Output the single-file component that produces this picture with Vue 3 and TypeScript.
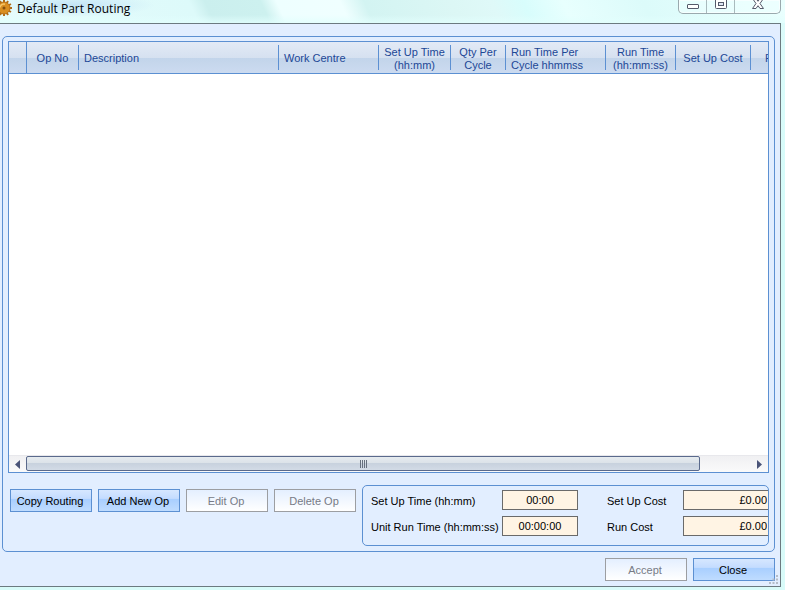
<script setup lang="ts">
import { ref } from 'vue'

interface Column {
  lines: string[]
  width: number
  align: 'left' | 'center'
}

const columns: Column[] = [
  { lines: ['Op No'], width: 52, align: 'center' },
  { lines: ['Description'], width: 200, align: 'left' },
  { lines: ['Work Centre'], width: 100, align: 'left' },
  { lines: ['Set Up Time', '(hh:mm)'], width: 72, align: 'center' },
  { lines: ['Qty Per', 'Cycle'], width: 55, align: 'center' },
  { lines: ['Run Time Per', 'Cycle hhmmss'], width: 100, align: 'left' },
  { lines: ['Run Time', '(hh:mm:ss)'], width: 70, align: 'center' },
  { lines: ['Set Up Cost'], width: 75, align: 'center' },
  { lines: ['Run Cost'], width: 75, align: 'center' },
]

const setUpTime = ref('00:00')
const unitRunTime = ref('00:00:00')
const setUpCost = ref('£0.00')
const runCost = ref('£0.00')

const teeth = Array.from({ length: 12 }, (_, i) => i * 30)
</script>

<template>
  <div class="window">
    <header class="titlebar">
      <svg class="app-icon" viewBox="0 0 16 16" aria-hidden="true">
        <g fill="#b06c18">
          <rect v-for="a in teeth" :key="a" x="7" y="0" width="2" height="4" :transform="`rotate(${a} 8 8)`" />
        </g>
        <circle cx="8" cy="8" r="6" fill="#d98e22" stroke="#b87018" />
        <path d="M4 7.500a4 4 0 0 1 5-3.300" fill="none" stroke="#f6c566" stroke-width="1.500" />
        <circle cx="8" cy="8" r="1.500" fill="#84500f" />
      </svg>
      <h1>Default Part Routing</h1>
      <div class="caption-buttons">
        <button type="button" class="cap" aria-label="Minimise">
          <svg width="14" height="14" viewBox="0 0 14 14"><rect x="1.500" y="4.500" width="11" height="4" rx="0.500" fill="#fff" stroke="#555a6b" /></svg>
        </button>
        <button type="button" class="cap" aria-label="Maximise">
          <svg width="14" height="14" viewBox="0 0 14 14"><rect x="1.500" y="-2.500" width="11" height="11" rx="1" fill="#fff" stroke="#555a6b" /><rect x="4.500" y="2.500" width="5" height="3" fill="#dfe6f4" stroke="#555a6b" /></svg>
        </button>
        <button type="button" class="cap wide" aria-label="Close window">
          <svg width="14" height="14" viewBox="0 0 14 14"><path d="M1.500-1.500h3.500l2 2.800 2-2.800h3.500L9 3.500l3.500 5H9L7 5.700l-2 2.800H1.500L5 3.500z" fill="#fff" stroke="#555a6b" /></svg>
        </button>
      </div>
    </header>

    <main class="client">
      <section class="panel">
        <div class="grid">
          <div class="grid-view">
            <table>
              <colgroup>
                <col class="selector-col" />
                <col v-for="c in columns" :key="c.lines[0]" :style="{ width: c.width + 'px' }" />
              </colgroup>
              <thead>
                <tr>
                  <td class="selector"></td>
                  <th v-for="c in columns" :key="c.lines[0]" scope="col" :class="c.align">
                    <div class="cell"><span><template v-for="(l, i) in c.lines" :key="l"><br v-if="i" />{{ l }}</template></span></div>
                  </th>
                </tr>
              </thead>
            </table>
          </div>
          <div class="scrollbar">
            <button type="button" class="arrow" aria-label="Scroll left">
              <svg width="5" height="9" viewBox="0 0 5 9"><path d="M5 0v9L0 4.500z" fill="#4a5478" /></svg>
            </button>
            <div class="track">
              <div class="thumb"><i></i><i></i><i></i><i></i></div>
            </div>
            <button type="button" class="arrow" aria-label="Scroll right">
              <svg width="5" height="9" viewBox="0 0 5 9"><path d="M0 0v9l5-4.500z" fill="#4a5478" /></svg>
            </button>
          </div>
        </div>

        <div class="lower">
          <div class="actions">
            <button type="button" class="btn">Copy Routing</button>
            <button type="button" class="btn">Add New Op</button>
            <button type="button" class="btn" disabled>Edit Op</button>
            <button type="button" class="btn" disabled>Delete Op</button>
          </div>
          <div class="totals">
            <label for="setup-time">Set Up Time (hh:mm)</label>
            <input id="setup-time" v-model="setUpTime" type="text" readonly />
            <label for="setup-cost" class="second">Set Up Cost</label>
            <input id="setup-cost" v-model="setUpCost" type="text" class="cost" readonly />
            <label for="run-time">Unit Run Time (hh:mm:ss)</label>
            <input id="run-time" v-model="unitRunTime" type="text" readonly />
            <label for="run-cost" class="second">Run Cost</label>
            <input id="run-cost" v-model="runCost" type="text" class="cost" readonly />
          </div>
        </div>
      </section>

      <footer class="footer">
        <button type="button" class="btn" disabled>Accept</button>
        <button type="button" class="btn">Close</button>
      </footer>
      <svg class="grip" width="9" height="9" viewBox="0 0 9 9" fill="#b4bcc8" aria-hidden="true">
        <path d="M7 0h2v2H7zM7 3.500h2v2H7zM7 7h2v2H7zM3.500 3.500h2v2h-2zM3.500 7h2v2h-2zM0 7h2v2H0z" />
      </svg>
    </main>
  </div>
</template>

<style>
body {
  margin: 0;
}
</style>

<style scoped>
.window,
.window * {
  box-sizing: border-box;
}
.window {
  display: flex;
  flex-direction: column;
  min-height: 100vh;
  padding: 0 4px 3px 0;
  background: linear-gradient(175deg, #dffcfb 0%, #d4fbf9 50%, #d9fbf9 100%);
  font-family: "Liberation Sans", Arial, sans-serif;
  font-size: 11px;
  line-height: 13px;
  color: #000;
  overflow: hidden;
}
button,
input {
  font: inherit;
  margin: 0;
}
.titlebar {
  display: flex;
  align-items: flex-start;
  height: 23px;
  margin-right: -4px;
  padding-right: 4px;
  background:
    linear-gradient(rgba(226, 255, 253, 0) 65%, rgba(226, 255, 253, 0.8) 100%),
    radial-gradient(ellipse 80px 12px at 75px 5px, #c4e4f6 0%, rgba(196, 228, 246, 0) 100%),
    linear-gradient(65deg, #e6fcfc 0%, #ddfafa 25%, #cbefee 27%, #cdf1ef 34%, #eeffff 36%, #f0ffff 44%, #d3f4f2 47%, #dcf7f5 58%, #dff9f8 63%, #d8fdfc 67%, #e8fffe 72%, #dcfbfa 82%, #eafffe 100%);
}
.app-icon {
  flex: none;
  width: 16px;
  height: 16px;
  margin-left: -4px;
}
h1 {
  flex: 1;
  margin: 0 0 0 5px;
  font: 12px/18px "Open Sans", "Noto Sans", sans-serif;
  white-space: nowrap;
}
.caption-buttons {
  display: flex;
  height: 14px;
  border: 1px solid #9aa9ae;
  border-top: 0;
  border-radius: 0 0 5px 5px;
  background: rgba(240, 255, 255, 0.5);
  box-shadow: inset 0 0 0 1px rgba(255, 255, 255, 0.6);
}
.cap {
  display: flex;
  justify-content: center;
  width: 28px;
  padding: 0;
  border: 0;
  border-right: 1px solid #a9babd;
  background: none;
}
.cap svg {
  flex: none;
}
.cap.wide {
  width: 45px;
  border-right: 0;
}
.client {
  position: relative;
  flex: 1;
  display: flex;
  flex-direction: column;
  padding: 12px 5px 5px 2px;
  border: solid #6c7a80;
  border-width: 1px 1px 1px 0;
  background: #e2eeff;
}
.panel {
  flex: 1;
  display: flex;
  flex-direction: column;
  padding: 4px 5px 5px;
  border: 1px solid #5c90d2;
  border-radius: 5px;
}
.grid {
  flex: 1;
  display: flex;
  flex-direction: column;
  border: 1px solid #5c90d2;
  background: #fff;
}
.grid-view {
  flex: 1;
  width: 100%;
  overflow: hidden;
  contain: inline-size;
}
table {
  width: 817px;
  table-layout: fixed;
  border-collapse: separate;
  border-spacing: 0;
}
.selector-col {
  width: 18px;
}
thead td,
thead th {
  height: 32px;
  padding: 3px 0;
  border-bottom: 1px solid #5c90d2;
  background: linear-gradient(#e2eaf6 0, #d6e1f0 50%, #c2d4ea 51%, #ccdbf0 100%);
  font-weight: normal;
  color: #1c4796;
}
thead td.selector {
  border-right: 1px solid #5c90d2;
}
.cell {
  display: flex;
  align-items: center;
  justify-content: center;
  height: 25px;
  padding-top: 2px;
  border-right: 1px solid #5c90d2;
  text-align: center;
  white-space: nowrap;
}
.left .cell {
  justify-content: flex-start;
  padding-left: 5px;
  text-align: left;
}
.scrollbar {
  display: flex;
  height: 17px;
  border-top: 1px solid #e8e8ec;
  background: linear-gradient(#f0f0f2, #fafafa);
}
.arrow {
  display: flex;
  align-items: center;
  justify-content: center;
  width: 17px;
  padding: 0;
  border: 0;
  background: none;
}
.track {
  flex: 1;
}
.thumb {
  display: flex;
  align-items: center;
  justify-content: center;
  gap: 1px;
  width: 93%;
  height: 15px;
  border: 1px solid #5a6a8c;
  border-radius: 2px;
  background: linear-gradient(#e6ebef 0, #dce3e9 45%, #c8d2de 50%, #d2dbe6 100%);
}
.thumb i {
  width: 1px;
  height: 8px;
  background: #66707e;
}
.lower {
  display: flex;
  justify-content: space-between;
  gap: 6px;
  margin-top: 12px;
}
.actions {
  display: flex;
  gap: 6px;
  padding: 4px 0 0 2px;
}
.btn {
  width: 82px;
  height: 23px;
  padding: 2px 2px 0 0;
  border: 1px solid #5c90d2;
  background: linear-gradient(#d6e7ff 0, #c4dcff 40%, #a9cfff 45%, #bfdcff 100%);
  color: #000;
  white-space: nowrap;
}
.btn:disabled {
  border-color: #9c9ea2;
  background: linear-gradient(#e4efff 0, #fff 100%);
  color: #777b86;
}
.totals {
  flex: 1;
  display: grid;
  grid-template-columns: 131px 76px 105px 1fr;
  grid-auto-rows: 20px;
  row-gap: 6px;
  align-items: center;
  height: 61px;
  padding: 4px 0 0 8px;
  border: 1px solid #5c90d2;
  border-radius: 5px;
}
.totals label {
  padding-top: 2px;
  white-space: nowrap;
}
.totals label.second {
  padding-left: 29px;
}
.totals input {
  width: 100%;
  height: 20px;
  min-width: 0;
  padding: 0;
  border: 1px solid #6a6a6a;
  border-radius: 0;
  background: #fff4e4;
  text-align: center;
}
.totals input.cost {
  padding-right: 1px;
  border-right: 0;
  text-align: right;
}
.footer {
  display: flex;
  justify-content: flex-end;
  gap: 6px;
  margin-top: 6px;
}
.grip {
  position: absolute;
  right: 2px;
  bottom: 2px;
}
</style>
